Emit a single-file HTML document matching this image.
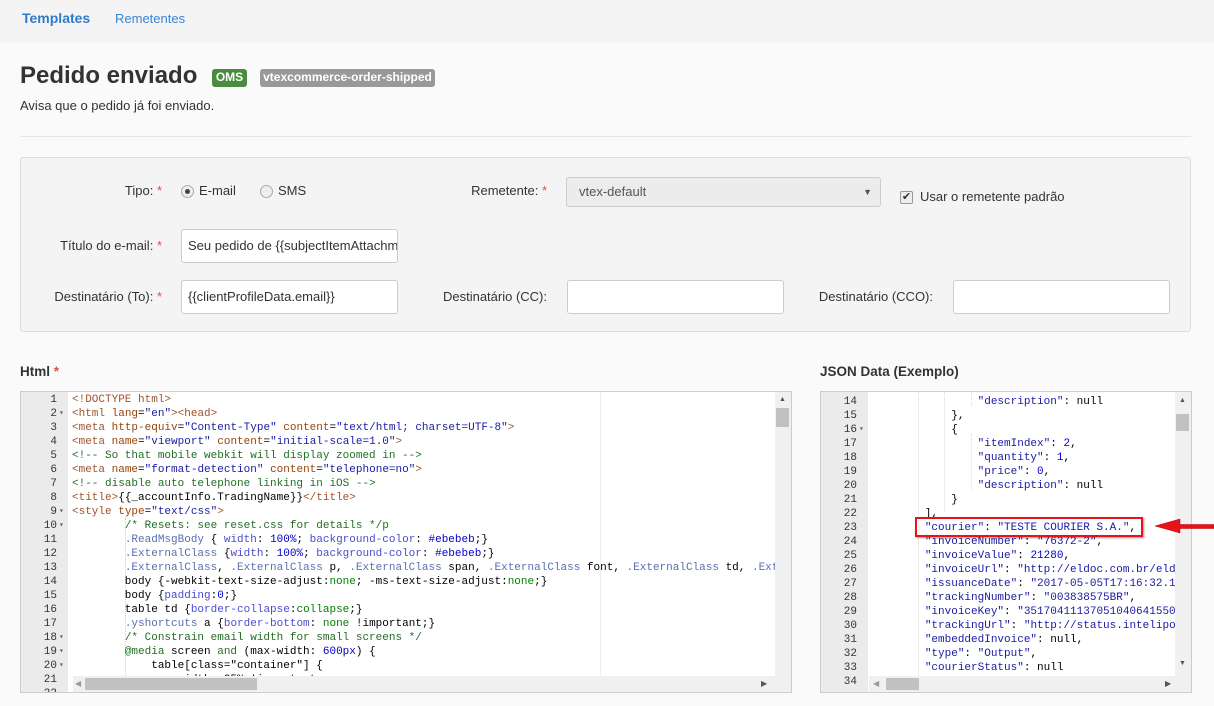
<!DOCTYPE html>
<html><head><meta charset="utf-8">
<style>
*{box-sizing:border-box;margin:0;padding:0}
body{width:1214px;height:706px;overflow:hidden;background:#fafafa;font-family:"Liberation Sans",sans-serif;color:#333;position:relative;font-size:13px}
.nav{position:absolute;left:0;top:0;width:1214px;height:42px;background:#f4f4f4}
.abs{position:absolute;white-space:nowrap}
.badge{position:absolute;color:#fff;font-weight:bold;font-size:12px;border-radius:3px;text-align:center;line-height:17px;height:18px}
.panel{position:absolute;left:20px;top:157px;width:1171px;height:175px;background:#f4f4f4;border:1px solid #ddd;border-radius:3px}
.lbl{position:absolute;font-size:13px;color:#333;text-align:right;white-space:nowrap}
.req{color:#d9534f}
.inp{position:absolute;background:#fff;border:1px solid #ccc;border-radius:3px;height:34px;font-size:13px;line-height:32px;padding-left:6px;white-space:nowrap;overflow:hidden}
.radio{position:absolute;width:13px;height:13px;border:1px solid #aaa;border-radius:50%;background:#eee}
.ed{position:absolute;border:1px solid #ccc;background:#fff;overflow:hidden}
.gut{position:absolute;left:0;top:0;bottom:0;width:47px;background:#ebebeb}
.code{position:absolute;font-family:"Liberation Mono",monospace;font-size:11px;line-height:14px;white-space:pre;color:#000}
.ln{position:absolute;font-family:"Liberation Mono",monospace;font-size:11px;line-height:14px;color:#333;text-align:right;white-space:pre}
.t{color:#a0522d}.a{color:#994409}.s{color:#1a1aa6}.c{color:#236e24}.k{color:#5a6fb0}.p{color:#4c4cd0}.n{color:#0000cd}.g{color:#008000}
</style></head><body>
<div class="nav"></div>
<div class="abs" style="left:22px;top:10px;font-size:14px;font-weight:bold;color:#2f7bc8">Templates</div>
<div class="abs" style="left:115px;top:11px;font-size:13px;color:#3a84d4">Remetentes</div>

<div class="abs" style="left:20px;top:62px;font-size:24px;font-weight:bold;color:#333">Pedido enviado</div>
<div class="badge" style="left:212px;top:69px;width:35px;background:#4a8c3f">OMS</div>
<div class="badge" style="left:260px;top:69px;width:175px;background:#999">vtexcommerce-order-shipped</div>
<div class="abs" style="left:20px;top:98px;font-size:13px">Avisa que o pedido já foi enviado.</div>
<div class="abs" style="left:20px;top:136px;width:1171px;height:1px;background:#e5e5e5"></div>

<div class="panel"></div>
<div class="lbl" style="left:0;width:162px;top:183px">Tipo: <span class="req">*</span></div>
<div class="radio" style="left:181px;top:185px"><div style="position:absolute;left:3px;top:3px;width:5px;height:5px;border-radius:50%;background:#444"></div></div>
<div class="abs" style="left:199px;top:183px;font-size:13px">E-mail</div>
<div class="radio" style="left:260px;top:185px"></div>
<div class="abs" style="left:278px;top:183px;font-size:13px">SMS</div>
<div class="lbl" style="left:400px;width:147px;top:183px">Remetente: <span class="req">*</span></div>
<div class="inp" style="left:566px;top:177px;width:315px;height:30px;line-height:28px;background:#ececec;color:#555;padding-left:12px">vtex-default<span style="position:absolute;right:8px;font-size:9px">▼</span></div>
<div style="position:absolute;left:900px;top:191px;width:13px;height:13px;border:1px solid #999;border-radius:2px;background:#eee;font-size:11px;line-height:11px;text-align:center">✔</div>
<div class="abs" style="left:920px;top:189px;font-size:13px">Usar o remetente padrão</div>

<div class="lbl" style="left:0;width:162px;top:238px">Título do e-mail: <span class="req">*</span></div>
<div class="inp" style="left:181px;top:229px;width:217px">Seu pedido de {{subjectItemAttachm</div>
<div class="lbl" style="left:0;width:162px;top:289px">Destinatário (To): <span class="req">*</span></div>
<div class="inp" style="left:181px;top:280px;width:217px">{{clientProfileData.email}}</div>
<div class="lbl" style="left:400px;width:147px;top:289px">Destinatário (CC):</div>
<div class="inp" style="left:567px;top:280px;width:217px"></div>
<div class="lbl" style="left:780px;width:153px;top:289px">Destinatário (CCO):</div>
<div class="inp" style="left:953px;top:280px;width:217px"></div>

<div class="abs" style="left:20px;top:364px;font-size:13.5px;font-weight:bold">Html <span class="req">*</span></div>
<div class="abs" style="left:820px;top:364px;font-size:13.5px;font-weight:bold">JSON Data (Exemplo)</div>

<div class="ed" style="left:20px;top:391px;width:772px;height:302px">
<div class="gut"></div>
<div class="ln" style="left:0;top:1px;width:36px">1
2
3
4
5
6
7
8
9
10
11
12
13
14
15
16
17
18
19
20
21
22</div>
<div class="ln" style="left:38px;top:1px;width:8px;text-align:left;font-size:8px;color:#666"> 
▾
 
 
 
 
 
 
▾
▾
 
 
 
 
 
 
 
▾
▾
▾</div>
<div style="position:absolute;left:47px;top:0;width:707px;height:284px;overflow:hidden">
<div style="position:absolute;left:57px;top:126px;height:300px;border-left:1px dotted #ccc"></div>
<div style="position:absolute;left:532px;top:0;height:300px;border-left:1px solid #eee"></div>
<div class="code" style="left:4px;top:1px"><span class="t">&lt;!DOCTYPE html&gt;</span>
<span class="t">&lt;html</span> <span class="a">lang</span>=<span class="s">"en"</span><span class="t">&gt;&lt;head&gt;</span>
<span class="t">&lt;meta</span> <span class="a">http-equiv</span>=<span class="s">"Content-Type"</span> <span class="a">content</span>=<span class="s">"text/html; charset=UTF-8"</span><span class="t">&gt;</span>
<span class="t">&lt;meta</span> <span class="a">name</span>=<span class="s">"viewport"</span> <span class="a">content</span>=<span class="s">"initial-scale=1.0"</span><span class="t">&gt;</span>
<span class="c">&lt;!-- So that mobile webkit will display zoomed in --&gt;</span>
<span class="t">&lt;meta</span> <span class="a">name</span>=<span class="s">"format-detection"</span> <span class="a">content</span>=<span class="s">"telephone=no"</span><span class="t">&gt;</span>
<span class="c">&lt;!-- disable auto telephone linking in iOS --&gt;</span>
<span class="t">&lt;title&gt;</span>{{_accountInfo.TradingName}}<span class="t">&lt;/title&gt;</span>
<span class="t">&lt;style</span> <span class="a">type</span>=<span class="s">"text/css"</span><span class="t">&gt;</span>
        <span class="c">/* Resets: see reset.css for details */p</span>
        <span class="k">.ReadMsgBody</span> { <span class="p">width</span>: <span class="n">100%</span>; <span class="p">background-color</span>: <span class="n">#ebebeb</span>;}
        <span class="k">.ExternalClass</span> {<span class="p">width</span>: <span class="n">100%</span>; <span class="p">background-color</span>: <span class="n">#ebebeb</span>;}
        <span class="k">.ExternalClass</span>, <span class="k">.ExternalClass</span> p, <span class="k">.ExternalClass</span> span, <span class="k">.ExternalClass</span> font, <span class="k">.ExternalClass</span> td, <span class="k">.ExternalClass</span> div
        body {-webkit-text-size-adjust:<span class="g">none</span>; -ms-text-size-adjust:<span class="g">none</span>;}
        body {<span class="p">padding</span>:<span class="n">0</span>;}
        table td {<span class="p">border-collapse</span>:<span class="g">collapse</span>;}
        <span class="k">.yshortcuts</span> a {<span class="p">border-bottom</span>: <span class="g">none</span> !important;}
        <span class="c">/* Constrain email width for small screens */</span>
        <span class="c">@media</span> screen <span class="c">and</span> (max-width: <span class="n">600px</span>) {
            table[class="container"] {
                width: 95% !important;</div>
</div>
<div style="position:absolute;left:754px;top:0;width:16px;height:284px;background:#f0f0f0"><div style="position:absolute;left:1px;top:16px;width:13px;height:19px;background:#c1c1c1"></div><div style="position:absolute;left:4px;top:4px;font-size:7px;color:#555">▲</div></div>
<div style="position:absolute;left:52px;top:284px;width:718px;height:16px;background:#f0f0f0"><div style="position:absolute;left:12px;top:2px;width:172px;height:12px;background:#c1c1c1"></div><div style="position:absolute;left:2px;top:3px;font-size:8px;color:#999">◀</div><div style="position:absolute;left:688px;top:3px;font-size:8px;color:#555">▶</div></div>
</div>

<div class="ed" style="left:820px;top:391px;width:372px;height:302px">
<div class="gut"></div>
<div class="ln" style="left:0;top:3px;width:36px">14
15
16
17
18
19
20
21
22
23
24
25
26
27
28
29
30
31
32
33
34</div>
<div class="ln" style="left:38px;top:31px;font-size:8px;color:#666">▾</div>
<div style="position:absolute;left:48px;top:0;width:306px;height:284px;overflow:hidden">
<div style="position:absolute;left:49px;top:0;height:300px;border-left:1px dotted #ddd"></div>
<div style="position:absolute;left:75px;top:0;height:120px;border-left:1px dotted #ddd"></div>
<div style="position:absolute;left:102px;top:0;height:14px;border-left:1px dotted #ddd"></div>
<div style="position:absolute;left:102px;top:42px;height:56px;border-left:1px dotted #ddd"></div>
<div class="code" style="left:3px;top:3px">                <span class="s">"description"</span>: null
            },
            {
                <span class="s">"itemIndex"</span>: <span class="n">2</span>,
                <span class="s">"quantity"</span>: <span class="n">1</span>,
                <span class="s">"price"</span>: <span class="n">0</span>,
                <span class="s">"description"</span>: null
            }
        ],
        <span class="s">"courier"</span>: <span class="s">"TESTE COURIER S.A."</span>,
        <span class="s">"invoiceNumber"</span>: <span class="s">"76372-2"</span>,
        <span class="s">"invoiceValue"</span>: <span class="n">21280</span>,
        <span class="s">"invoiceUrl"</span>: <span class="s">"http://eldoc.com.br/eldoc/nfe</span>
        <span class="s">"issuanceDate"</span>: <span class="s">"2017-05-05T17:16:32.1234</span>
        <span class="s">"trackingNumber"</span>: <span class="s">"003838575BR"</span>,
        <span class="s">"invoiceKey"</span>: <span class="s">"35170411137051040641550</span>
        <span class="s">"trackingUrl"</span>: <span class="s">"http://status.intelipost</span>
        <span class="s">"embeddedInvoice"</span>: null,
        <span class="s">"type"</span>: <span class="s">"Output"</span>,
        <span class="s">"courierStatus"</span>: null
</div>
</div>
<div style="position:absolute;left:354px;top:0;width:16px;height:284px;background:#f0f0f0"><div style="position:absolute;left:1px;top:22px;width:13px;height:17px;background:#c1c1c1"></div><div style="position:absolute;left:4px;top:5px;font-size:7px;color:#555">▲</div><div style="position:absolute;left:4px;top:268px;font-size:7px;color:#555">▼</div></div>
<div style="position:absolute;left:48px;top:284px;width:322px;height:16px;background:#f0f0f0"><div style="position:absolute;left:17px;top:2px;width:33px;height:12px;background:#c1c1c1"></div><div style="position:absolute;left:4px;top:3px;font-size:8px;color:#999">◀</div><div style="position:absolute;left:296px;top:3px;font-size:8px;color:#555">▶</div></div>
</div>

<div style="position:absolute;left:915px;top:517px;width:228px;height:20px;border:2px solid #e8121a;box-shadow:1px 1px 2px rgba(0,0,0,.4)"></div>
<svg style="position:absolute;left:1150px;top:514px" width="64" height="24"><path d="M64 10.5 L30 10.5 L30 5 L5 12 L30 19 L30 14.5 L64 14.5 Z" fill="#e8121a" stroke="#b00" stroke-width=".5"/></svg>
</body></html>
